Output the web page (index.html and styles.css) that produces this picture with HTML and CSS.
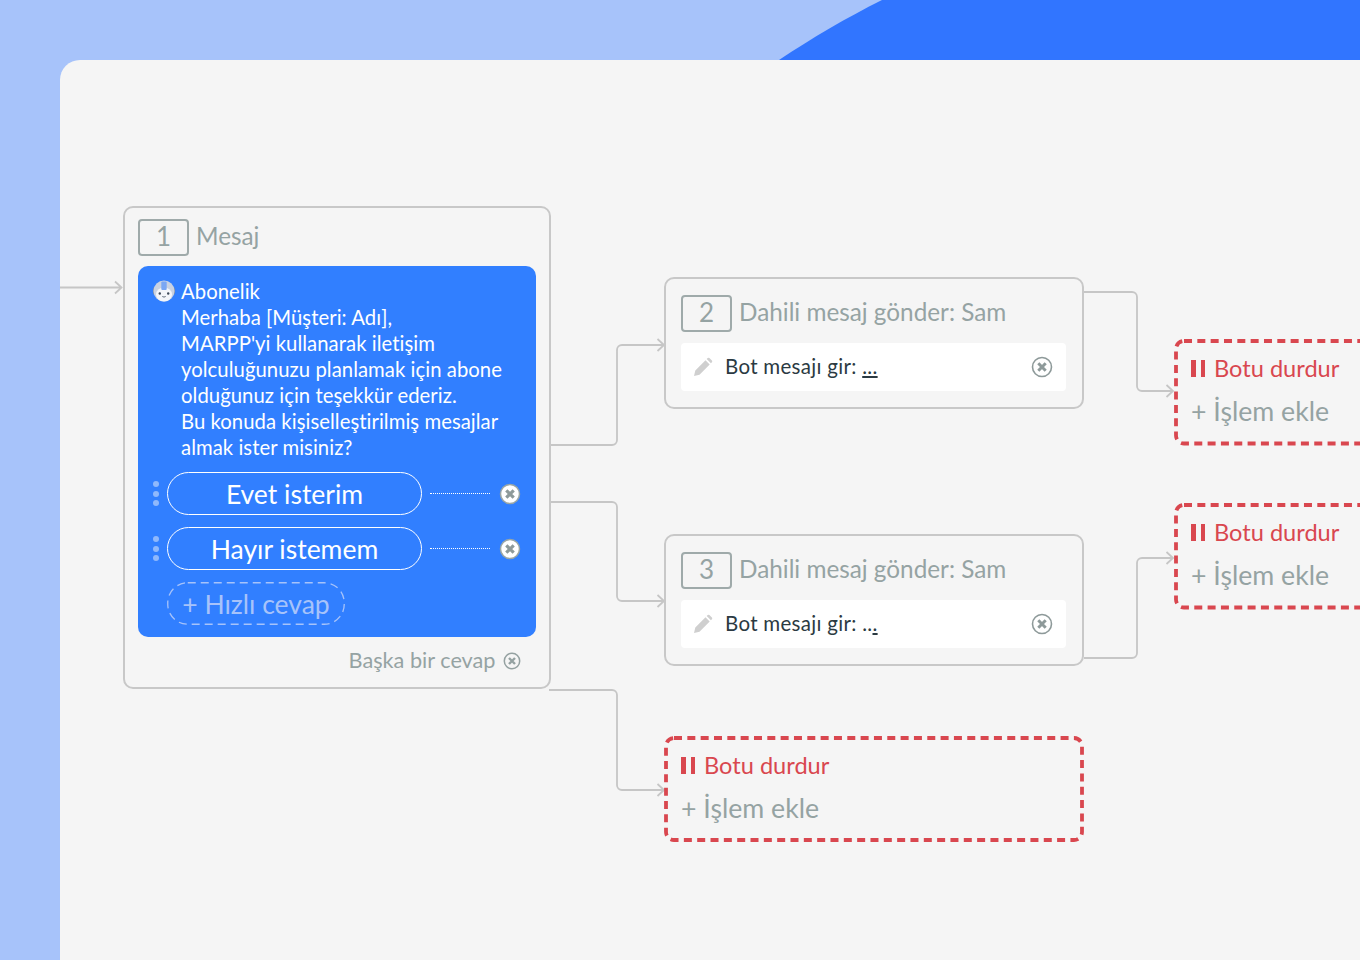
FILE: index.html
```html
<!DOCTYPE html>
<html lang="tr">
<head>
<meta charset="utf-8">
<title>Bot akışı</title>
<link rel="stylesheet" href="styles.css">
</head>
<body>
<svg class="wave" width="1360" height="60" viewBox="0 0 1360 60"><path d="M779 60C812 38 846 18 882 0H1360V60Z" fill="#3175ff"/></svg>
<main class="panel">
  <svg class="wires" width="1360" height="960" viewBox="0 0 1360 960" fill="none" stroke="#c6c6c6" stroke-width="1.8">
    <path d="M60 287.500H121M115 281.500l6.500 6-6.500 6"/>
    <path d="M550 445H612a5 5 0 0 0 5-5V350a5 5 0 0 1 5-5H664M657.500 339l6.500 6-6.500 6"/>
    <path d="M550 502H612a5 5 0 0 1 5 5V596a5 5 0 0 0 5 5H664M657.500 595l6.500 6-6.500 6"/>
    <path d="M549 690H612a5 5 0 0 1 5 5V785a5 5 0 0 0 5 5H664M657.500 784l6.500 6-6.500 6"/>
    <path d="M1084 292H1132a5 5 0 0 1 5 5V386a5 5 0 0 0 5 5H1173M1166.500 385l6.500 6-6.500 6"/>
    <path d="M1084 658H1132a5 5 0 0 0 5-5V563a5 5 0 0 1 5-5H1173M1166.500 552l6.500 6-6.500 6"/>
  </svg>

  <section class="node node-msg">
    <header class="node-head"><span class="num">1</span><span class="title">Mesaj</span></header>
    <div class="bubble">
      <div class="msg">
        <svg class="avatar" width="22" height="22" viewBox="0 0 22 22"><path d="M2 7a2.500 2.500 0 0 0-2 2.500v3A2.500 2.500 0 0 0 2 15zM20 7a2.500 2.500 0 0 1 2 2.500v3A2.500 2.500 0 0 1 20 15z" fill="#7f8ea8"/><circle cx="11" cy="11" r="10.500" fill="#c9d2e2"/><ellipse cx="11" cy="14.500" rx="8" ry="7" fill="#f4f6fa"/><rect x="8.300" y="1.500" width="5.400" height="8.500" rx="1" fill="#7aa7f4"/><circle cx="6.800" cy="13.500" r="1.200" fill="#3e4a5a"/><circle cx="15.200" cy="13.500" r="1.200" fill="#3e4a5a"/><path d="M9.300 16.500q1.700 1.200 3.400 0" stroke="#4d5a6a" stroke-width=".9" fill="none"/></svg>
        <p class="msg-text">Abonelik<br>Merhaba [Müşteri: Adı],<br>MARPP'yi kullanarak iletişim<br>yolculuğunuzu planlamak için abone<br>olduğunuz için teşekkür ederiz.<br>Bu konuda kişiselleştirilmiş mesajlar<br>almak ister misiniz?</p>
      </div>
      <div class="reply">
        <span class="grip"><i></i><i></i><i></i></span>
        <span class="pill">Evet isterim</span>
        <span class="dots"></span>
        <svg class="x" width="22" height="22" viewBox="0 0 22 22"><circle cx="11" cy="11" r="9.500" fill="#fff" stroke="#9aa6a6" stroke-width="1.500"/><path d="M7.300 7.300l7.400 7.400M14.700 7.300l-7.400 7.400" stroke="#8e9a9a" stroke-width="3.200"/></svg>
      </div>
      <div class="reply">
        <span class="grip"><i></i><i></i><i></i></span>
        <span class="pill">Hayır istemem</span>
        <span class="dots"></span>
        <svg class="x" width="22" height="22" viewBox="0 0 22 22"><circle cx="11" cy="11" r="9.500" fill="#fff" stroke="#9aa6a6" stroke-width="1.500"/><path d="M7.300 7.300l7.400 7.400M14.700 7.300l-7.400 7.400" stroke="#8e9a9a" stroke-width="3.200"/></svg>
      </div>
      <div class="reply">
        <span class="pill-add"><svg class="add-dash" width="178" height="43" viewBox="0 0 178 43"><rect x=".75" y=".75" width="176.500" height="41.500" rx="20" fill="none" stroke="#a7c3fa" stroke-width="1.300" stroke-dasharray="8 5"/></svg>+ Hızlı cevap</span>
      </div>
    </div>
    <footer class="other"><span class="other-text">Başka bir cevap</span>
      <svg width="18" height="18" viewBox="0 0 18 18"><circle cx="9" cy="9" r="7.700" fill="none" stroke="#94a1a1" stroke-width="1.500"/><path d="M6 6l6 6M12 6l-6 6" stroke="#94a1a1" stroke-width="2.400"/></svg>
    </footer>
  </section>

  <section class="node node-a">
    <header class="node-head"><span class="num">2</span><span class="title">Dahili mesaj gönder: Sam</span></header>
    <div class="field">
      <svg class="pen" width="20" height="20" viewBox="0 0 20 20"><path d="M1 19l1.300-5.500L12.500 3.300l4.200 4.200L6.500 17.700zM13.700 2.100l1-1a1.200 1.200 0 0 1 1.700 0l2.500 2.500a1.200 1.200 0 0 1 0 1.700l-1 1z" fill="#cfcfcf"/></svg>
      <span class="field-text">Bot mesajı gir: <u>...</u></span>
      <svg class="x" width="22" height="22" viewBox="0 0 22 22"><circle cx="11" cy="11" r="9.500" fill="none" stroke="#8e9a9a" stroke-width="1.600"/><path d="M7.300 7.300l7.400 7.400M14.700 7.300l-7.400 7.400" stroke="#8e9a9a" stroke-width="3"/></svg>
    </div>
  </section>

  <section class="node node-b">
    <header class="node-head"><span class="num">3</span><span class="title">Dahili mesaj gönder: Sam</span></header>
    <div class="field">
      <svg class="pen" width="20" height="20" viewBox="0 0 20 20"><path d="M1 19l1.300-5.500L12.500 3.300l4.200 4.200L6.500 17.700zM13.700 2.100l1-1a1.200 1.200 0 0 1 1.700 0l2.500 2.500a1.200 1.200 0 0 1 0 1.700l-1 1z" fill="#cfcfcf"/></svg>
      <span class="field-text">Bot mesajı gir: ..<u>.</u></span>
      <svg class="x" width="22" height="22" viewBox="0 0 22 22"><circle cx="11" cy="11" r="9.500" fill="none" stroke="#8e9a9a" stroke-width="1.600"/><path d="M7.300 7.300l7.400 7.400M14.700 7.300l-7.400 7.400" stroke="#8e9a9a" stroke-width="3"/></svg>
    </div>
  </section>

  <section class="stop stop-a">
    <svg class="dash" width="240" height="106" viewBox="0 0 240 106"><rect x="2" y="2" width="236" height="102.500" rx="8" fill="none" stroke="#d9474f" stroke-width="3.800" stroke-dasharray="8 5.330"/></svg>
    <div class="stop-line"><span class="pause"><i></i><i></i></span>Botu durdur</div>
    <div class="add-line">+ İşlem ekle</div>
  </section>
  <section class="stop stop-b">
    <svg class="dash" width="240" height="106" viewBox="0 0 240 106"><rect x="2" y="2" width="236" height="102.500" rx="8" fill="none" stroke="#d9474f" stroke-width="3.800" stroke-dasharray="8 5.330"/></svg>
    <div class="stop-line"><span class="pause"><i></i><i></i></span>Botu durdur</div>
    <div class="add-line">+ İşlem ekle</div>
  </section>
  <section class="stop stop-c">
    <svg class="dash" width="420" height="106" viewBox="0 0 420 106"><rect x="2" y="2" width="416" height="102" rx="8" fill="none" stroke="#d9474f" stroke-width="3.800" stroke-dasharray="8 5.330"/></svg>
    <div class="stop-line"><span class="pause"><i></i><i></i></span>Botu durdur</div>
    <div class="add-line">+ İşlem ekle</div>
  </section>
</main>
</body>
</html>
```
FILE: styles.css
```css
* { box-sizing: border-box; }
html, body { margin: 0; height: 100%; }
body {
  position: relative;
  width: 1360px;
  height: 960px;
  overflow: hidden;
  background: #a7c3fa;
  font-family: Lato, "Noto Sans", sans-serif;
  font-variant-ligatures: none;
  color: #95a3a3;
}
.wave { position: absolute; left: 0; top: 0; display: block; }
.panel {
  position: absolute;
  left: 60px;
  top: 60px;
  width: 1300px;
  height: 900px;
  background: #f5f5f5;
  border-top-left-radius: 20px;
}
.wires { position: absolute; left: -60px; top: -60px; }

.node {
  position: absolute;
  background: #f5f5f5;
  border: 2px solid #c8c8c8;
  border-radius: 10px;
}
.node-msg { left: 63px; top: 146px; width: 428px; height: 483px; padding: 11px 13px 0; }
.node-a { left: 604px; top: 217px; width: 420px; height: 132px; padding: 16px 16px 0 15px; }
.node-b { left: 604px; top: 474px; width: 420px; height: 132px; padding: 16px 16px 0 15px; }

.node-head { display: flex; align-items: center; gap: 7px; height: 37px; }
.num {
  width: 51px;
  height: 37px;
  border: 2px solid #9faaaa;
  border-radius: 4px;
  text-align: center;
  font-size: 26px;
  line-height: 31px;
  color: #95a3a3;
}
.title { padding-bottom: 4px; font-size: 24.300px; color: #95a3a3; }

.bubble {
  margin-top: 10px;
  width: 397.500px;
  height: 371px;
  padding: 12px 0 0 15px;
  background: #317fff;
  border-radius: 10px;
  color: #fff;
}
.msg { position: relative; padding-left: 28px; }
.avatar { position: absolute; left: 0; top: 2px; }
.msg-text { margin: 0; font-size: 20.300px; letter-spacing: .05px; line-height: 26px; white-space: nowrap; }

.reply { position: relative; display: flex; align-items: center; height: 43px; margin-top: 12px; padding-left: 14px; }
.grip { position: absolute; left: 0; display: flex; flex-direction: column; gap: 3.500px; }
.grip i { display: block; width: 6px; height: 6px; border-radius: 50%; background: #8fb8fc; }
.pill {
  width: 255px;
  height: 43px;
  border: 1.500px solid #fff;
  border-radius: 22px;
  text-align: center;
  font-size: 26.500px;
  line-height: 42px;
}
.dots { width: 60px; margin: 0 9px 0 8px; border-top: 1.500px dotted #fff; }
.pill-add {
  position: relative;
  width: 178px;
  height: 43px;
  text-align: center;
  font-size: 26.500px;
  line-height: 45px;
  color: #a7c3fa;
  white-space: nowrap;
}
.add-dash { position: absolute; left: 0; top: 0; }

.other { display: flex; justify-content: flex-end; align-items: center; gap: 7px; width: 397.500px; height: 47px; padding-right: 15px; font-size: 21.700px; }
.other-text { padding-bottom: 2px; }

.field {
  display: flex;
  align-items: center;
  margin-top: 11px;
  height: 48px;
  padding: 0 13px 0 12px;
  background: #fff;
  border-radius: 4px;
}
.pen { flex: none; }
.field-text { flex: 1; margin-left: 12px; padding-bottom: 2px; font-size: 20.500px; letter-spacing: .3px; color: #2b3a42; }

.stop { position: absolute; display: flex; flex-direction: column; padding: 13px 0 0 17px; }
.stop-a { left: 1114px; top: 279px; width: 240px; height: 106px; }
.stop-b { left: 1114px; top: 443px; width: 240px; height: 106px; }
.stop-c { left: 604px; top: 676px; width: 420px; height: 106px; }
.dash { position: absolute; left: 0; top: 0; overflow: visible; }
.stop-line { display: flex; align-items: center; height: 32px; font-size: 23.600px; color: #d9474f; white-space: nowrap; }
.pause { display: flex; gap: 5px; margin-right: 9px; }
.pause i { display: block; width: 4.500px; height: 17px; background: #d9474f; }
.add-line { margin-top: 10px; height: 34px; line-height: 34px; font-size: 26.700px; color: #95a3a3; white-space: nowrap; }
```
